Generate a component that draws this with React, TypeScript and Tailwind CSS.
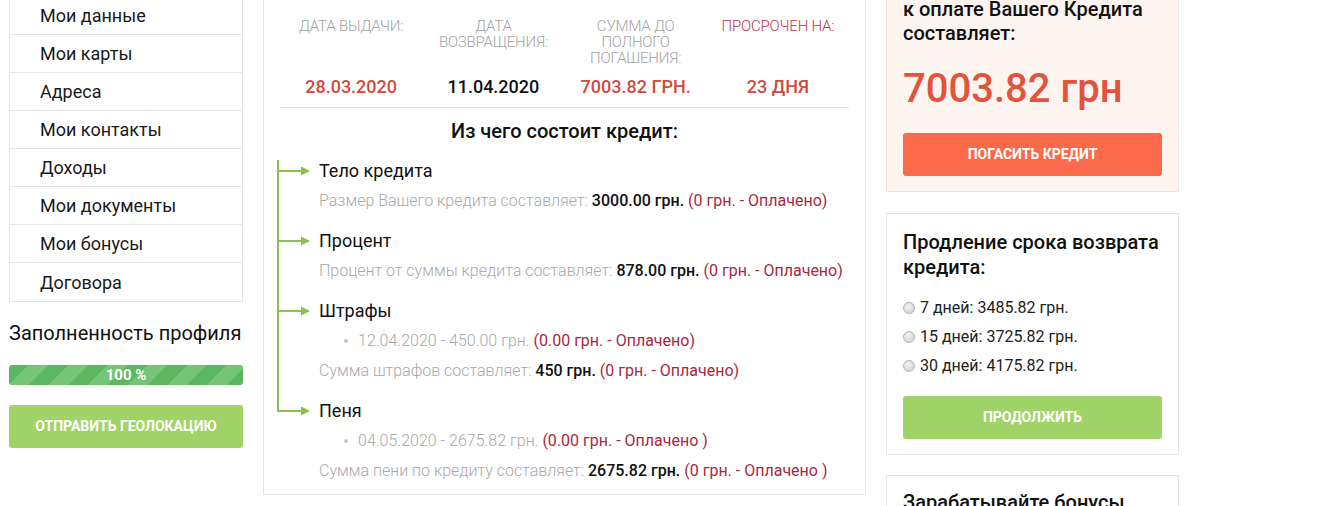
import React from 'react';

const menu = [
  'Мои данные',
  'Мои карты',
  'Адреса',
  'Мои контакты',
  'Доходы',
  'Мои документы',
  'Мои бонусы',
  'Договора',
];

const columns = [
  { label: ['ДАТА ВЫДАЧИ:'], value: '28.03.2020', labelColor: 'text-[#a3a3a3]', valueColor: 'text-[#d24a3c]' },
  { label: ['ДАТА', 'ВОЗВРАЩЕНИЯ:'], value: '11.04.2020', labelColor: 'text-[#a3a3a3]', valueColor: 'text-[#111]' },
  { label: ['СУММА ДО', 'ПОЛНОГО', 'ПОГАШЕНИЯ:'], value: '7003.82 ГРН.', labelColor: 'text-[#a3a3a3]', valueColor: 'text-[#d24a3c]' },
  { label: ['ПРОСРОЧЕН НА:'], value: '23 ДНЯ', labelColor: 'text-[#b8374f]', valueColor: 'text-[#d24a3c]' },
];

type Part = {
  title: string;
  bullet?: { text: string; paid: string };
  sumLabel: string;
  sum: string;
  paid: string;
};

const parts: Part[] = [
  { title: 'Тело кредита', sumLabel: 'Размер Вашего кредита составляет:', sum: '3000.00 грн.', paid: '(0 грн. - Оплачено)' },
  { title: 'Процент', sumLabel: 'Процент от суммы кредита составляет:', sum: '878.00 грн.', paid: '(0 грн. - Оплачено)' },
  {
    title: 'Штрафы',
    bullet: { text: '12.04.2020 - 450.00 грн.', paid: '(0.00 грн. - Оплачено)' },
    sumLabel: 'Сумма штрафов составляет:',
    sum: '450 грн.',
    paid: '(0 грн. - Оплачено)',
  },
  {
    title: 'Пеня',
    bullet: { text: '04.05.2020 - 2675.82 грн.', paid: '(0.00 грн. - Оплачено )' },
    sumLabel: 'Сумма пени по кредиту составляет:',
    sum: '2675.82 грн.',
    paid: '(0 грн. - Оплачено )',
  },
];

const extend = [
  '7 дней: 3485.82 грн.',
  '15 дней: 3725.82 грн.',
  '30 дней: 4175.82 грн.',
];

function Arrow() {
  return (
    <svg width="34" height="12" viewBox="0 0 34 12" className="block">
      <line x1="0" y1="6" x2="25" y2="6" stroke="#8cc152" strokeWidth="2" />
      <polygon points="24,1.5 33,6 24,10.5" fill="#8cc152" />
    </svg>
  );
}

function TreeItem({ part, first, last }: { part: Part; first: boolean; last: boolean }) {
  return (
    <div className="flex">
      <div className="relative w-[42px] shrink-0">
        <div
          className={`absolute left-0 w-[2px] bg-[#8cc152] ${first ? 'top-[4px]' : 'top-0'} ${last ? 'h-[16px]' : 'bottom-0'}`}
        />
        <div className="absolute left-0 top-[9px]">
          <Arrow />
        </div>
      </div>
      <div className={`flex flex-col ${last ? '' : 'pb-[10px]'}`}>
        <div className="h-[30px] leading-[30px] text-[18px] text-[#111]">{part.title}</div>
        {part.bullet && (
          <div className="h-[30px] leading-[30px] text-[16px] pl-[25px] flex items-center">
            <span className="w-[4px] h-[4px] rounded-full bg-[#c4c4c4] mr-[10px]" />
            <span className="font-light text-[#a8a8a8]">{part.bullet.text}&nbsp;</span>
            <span className="text-[#a8283f]">{part.bullet.paid}</span>
          </div>
        )}
        <div className="h-[30px] leading-[30px] text-[16px]">
          <span className="font-light text-[#a8a8a8]">{part.sumLabel} </span>
          <span className="font-medium text-[#111]">{part.sum} </span>
          <span className="text-[#a8283f]">{part.paid}</span>
        </div>
      </div>
    </div>
  );
}

export default function App() {
  return (
    <div className="w-[1329px] h-[506px] overflow-hidden bg-white font-['Roboto',_'Noto_Sans',_sans-serif] text-[#111]">
      <div className="flex items-start">
        {/* left column */}
        <div className="ml-[9px] w-[234px] -mt-[4px] flex flex-col">
          <div className="border border-[#e6e6e6]">
            {menu.map((m, i) => (
              <div
                key={m}
                className={`h-[38px] flex items-center pl-[30px] text-[18px] text-[#1a1a1a] ${i < menu.length - 1 ? 'border-b border-[#e6e6e6]' : ''}`}
              >
                {m}
              </div>
            ))}
          </div>
          <div className="mt-[19px] text-[20px] leading-[24px] text-[#111]">Заполненность профиля</div>
          <div className="mt-[20px] h-[20px] rounded-[3px] bg-[#5db760] bg-[image:repeating-linear-gradient(135deg,#5db760_0px,#5db760_14px,#74c577_14px,#74c577_28px)] flex items-center justify-center text-white text-[15px] font-bold">
            100 %
          </div>
          <button className="mt-[20px] h-[43px] rounded-[3px] bg-[#a0d468] text-white text-[14px] font-bold uppercase">
            Отправить геолокацию
          </button>
        </div>

        {/* center */}
        <div className="ml-[20px] w-[603px] -mt-[10px] border border-[#e6e6e6] pt-[27px] pb-[8px]">
          <div className="mx-[16px]">
            <div className="grid grid-cols-4 border-b border-[#e3e3e3] pb-[9px]">
              {columns.map(c => (
                <div key={c.value} className="flex flex-col items-center text-center">
                  <div className={`h-[58px] text-[15px] leading-[16px] font-light tracking-[-0.2px] ${c.labelColor}`}>
                    {c.label.map(l => (
                      <div key={l}>{l}</div>
                    ))}
                  </div>
                  <div className={`h-[22px] leading-[22px] text-[18px] font-medium ${c.valueColor}`}>{c.value}</div>
                </div>
              ))}
            </div>
          </div>
          <div className="mt-[11px] text-center text-[20px] leading-[24px] font-medium text-[#111]">
            Из чего состоит кредит:
          </div>
          <div className="mt-[13px] ml-[13px] flex flex-col">
            {parts.map((p, i) => (
              <TreeItem key={p.title} part={p} first={i === 0} last={i === parts.length - 1} />
            ))}
          </div>
        </div>

        {/* right */}
        <div className="ml-[20px] w-[293px] -mt-[22px] flex flex-col">
          <div className="border border-[#f4e3dc] bg-[#fdf4f0] px-[16px] pt-[18px] pb-[15px]">
            <div className="text-[20px] leading-[24px] font-medium text-[#111]">
              к оплате Вашего Кредита составляет:
            </div>
            <div className="mt-[20px] text-[40px] leading-[48px] font-medium text-[#e2533c]">7003.82 грн</div>
            <button className="mt-[20px] w-full h-[43px] rounded-[3px] bg-[#fb6b4b] text-white text-[14px] font-bold uppercase">
              Погасить кредит
            </button>
          </div>

          <div className="mt-[21px] border border-[#e6e6e6] px-[16px] pt-[16px] pb-[15px]">
            <div className="text-[20px] leading-[25px] font-medium text-[#111]">
              Продление срока возврата кредита:
            </div>
            <div className="mt-[13px] flex flex-col">
              {extend.map(e => (
                <label key={e} className="h-[29px] flex items-center text-[16px] text-[#222]">
                  <span className="w-[12px] h-[12px] rounded-full border border-[#b5b5b5] bg-[radial-gradient(circle_at_40%_35%,#f4f4f4,#c9c9c9)] mr-[5px]" />
                  {e}
                </label>
              ))}
            </div>
            <button className="mt-[16px] w-full h-[43px] rounded-[3px] bg-[#a0d468] text-white text-[14px] font-bold uppercase">
              Продолжить
            </button>
          </div>

          <div className="mt-[20px] border border-[#e6e6e6] px-[16px] pt-[14px] pb-[16px]">
            <div className="text-[20px] leading-[25px] font-medium text-[#111]">Зарабатывайте бонусы</div>
          </div>
        </div>
      </div>
    </div>
  );
}
